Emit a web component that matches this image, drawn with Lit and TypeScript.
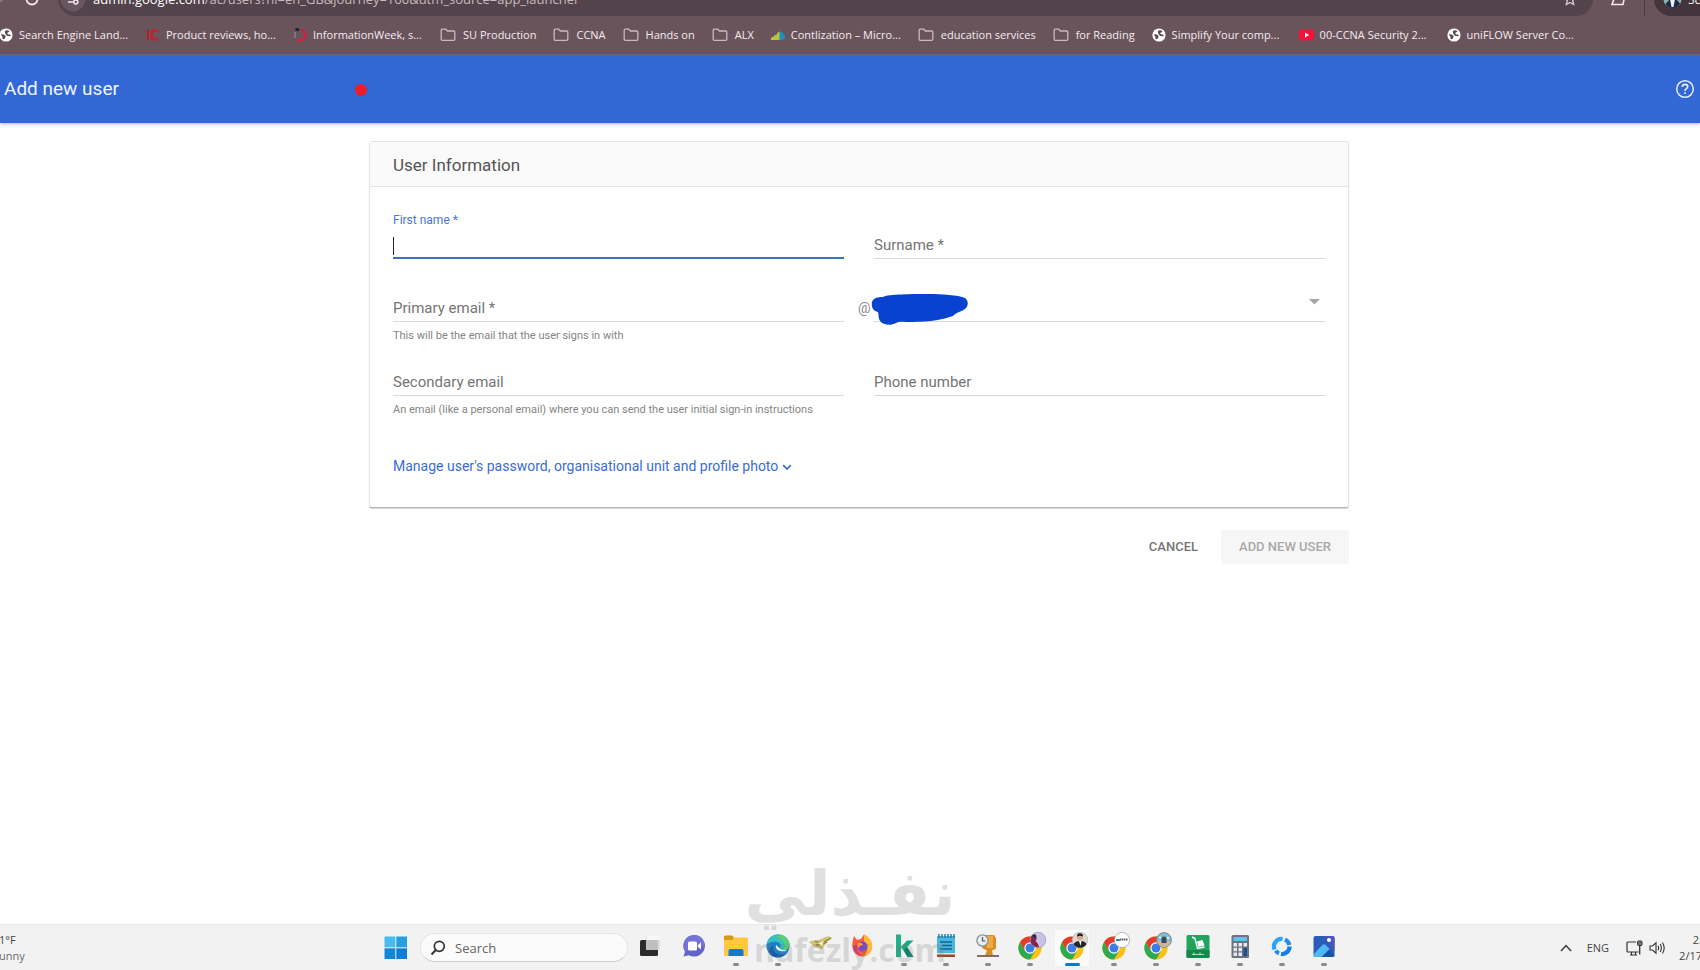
import { LitElement, html, css, svg, nothing } from "lit";
import { customElement } from "lit/decorators.js";

const globe = svg`<svg class="ic" width="14" height="14" viewBox="0 0 14 14"><circle cx="7" cy="7" r="6.6" fill="#fff"/><path d="M2 6.500C3 6 4.500 6 5.500 7 7 7.500 6.500 9 6 10 5.500 11.500 4 11.500 3.200 10.500 4.500 9 2.500 8.500 2 6.500ZM6 3C7 2 9.500 2 10.500 3.200 9.500 4.500 8.500 4.200 8.200 5.500 9 6.800 11 6.200 12 7.500 11.500 8.500 9.500 8.500 8 7.800 6.500 6.800 5.500 4.500 6 3Z" fill="#5b474f"/></svg>`;
const folder = svg`<svg class="ic" width="16" height="14" viewBox="0 0 16 14"><path d="M1.2 2.2Q1.2 1.2 2.2 1.2H5.8L7.4 3H13.8Q14.8 3 14.8 4V11.3Q14.8 12.3 13.8 12.3H2.2Q1.2 12.3 1.2 11.3Z" fill="none" stroke="#c9b9c0" stroke-width="1.3"/></svg>`;
const cnet = svg`<svg class="ic" width="14" height="14" viewBox="0 0 14 14"><path d="M12.500 1.500H8Q4 1.500 4 7T8 12.500H12.500V10.200H8.800Q6.800 10.200 6.800 7T8.800 3.800H12.500Z" fill="#c3202a"/><path d="M2 1.500V12.500" stroke="#a8242d" stroke-width="2"/></svg>`;
const infoweek = svg`<svg class="ic" width="14" height="14" viewBox="0 0 14 14"><path d="M8 1.8A5.3 5.3 0 1 1 4.2 11.6" fill="none" stroke="#d2203f" stroke-width="2.6"/><path d="M2 4V10" stroke="#a58f98" stroke-width="1"/><rect x="2.5" y="0" width="3.6" height="3" fill="#1c2145"/></svg>`;
const chart = svg`<svg class="ic" width="14" height="14" viewBox="0 0 14 14"><path d="M0 12V9.8L3 8.6V7.4L6 6.4V5L9 3.4V12Z" fill="#b9c43c"/><path d="M8.5 3.4 12 4.6 14 8V10.6L11.5 12H8.5Z" fill="#1f8fc0"/></svg>`;
const tube = svg`<svg class="ic" width="15" height="14" viewBox="0 0 15 14"><rect y="1.5" width="15" height="11" rx="2.2" fill="#f6123a"/><path d="M6 4.6 10 7 6 9.4Z" fill="#fff"/></svg>`;

const bookmarks: [unknown, string, boolean][] = [
  [globe, "Search Engine Land...", true],
  [cnet, "Product reviews, ho...", true],
  [infoweek, "InformationWeek, s...", true],
  [folder, "SU Production", false],
  [folder, "CCNA", false],
  [folder, "Hands on", false],
  [folder, "ALX", false],
  [chart, "Contlization – Micro...", true],
  [folder, "education services", false],
  [folder, "for Reading", false],
  [globe, "Simplify Your comp...", true],
  [tube, "00-CCNA Security 2...", true],
  [globe, "uniFLOW Server Co...", true],
];

const chrome = (badge: unknown) => svg`<svg width="34" height="30" viewBox="0 0 34 30">
  <circle cx="17" cy="17" r="11.6" fill="#fbc116"/>
  <path d="M6.95 11.2A11.6 11.6 0 0 1 27.05 11.2L17 11.6 12 19.9Z" fill="#e33b2e"/>
  <path d="M6.95 11.2A11.6 11.6 0 0 0 17 28.6L22 19.9H12Z" fill="#2da94f"/>
  <circle cx="17" cy="17" r="5.7" fill="#fff"/><circle cx="17" cy="17" r="4.5" fill="#3b7de8"/>
  ${badge}</svg>`;

const apps: { name: string; state: "" | "open" | "active"; icon: unknown }[] = [
  { name: "Task view", state: "", icon: svg`<svg width="34" height="30" viewBox="0 0 34 30"><rect x="5" y="9" width="18" height="16" rx="1.5" fill="#2b2b2b"/><path d="M11 5H25V17Q25 19 23 19H11Z" fill="#d9d9d9" opacity=".85"/><path d="M12 5H25V9H12Z" fill="#f7f7f7"/></svg>` },
  { name: "Chat", state: "", icon: svg`<svg width="34" height="30" viewBox="0 0 34 30"><path d="M17 4A10.8 10.8 0 1 1 11.8 24.2L6.6 25.4 8 20.6A10.8 10.8 0 0 1 17 4Z" fill="#6264c7"/><path d="M17 4A10.8 10.8 0 0 1 27.8 15L8 20A10.8 10.8 0 0 1 17 4Z" fill="#7673d6"/><rect x="11" y="10.5" width="9" height="9" rx="1.6" fill="#fff"/><path d="M21 14 24 11.5V18.5L21 16Z" fill="#fff"/></svg>` },
  { name: "File Explorer", state: "open", icon: svg`<svg width="34" height="30" viewBox="0 0 34 30"><path d="M5 6Q5 4.500 6.500 4.500H13L15.500 7.500H5Z" fill="#d6920f"/><rect x="5" y="6.500" width="24" height="18.500" rx="1.600" fill="#ffc83d"/><path d="M5 5.500H13L15 6.500 13 9H5Z" fill="#d99a1c"/><path d="M9.500 25V20Q9.500 18 11.500 18H22.500Q24.500 18 24.500 20V25Z" fill="#1976c8"/></svg>` },
  { name: "Edge", state: "open", icon: svg`<svg width="34" height="30" viewBox="0 0 34 30"><circle cx="17" cy="15" r="11.500" fill="#1b7fcc"/><path d="M5.600 14C6.500 7 11.500 3.500 17 3.500 24 3.500 28.500 8.500 28.500 13.500 28.500 17.500 25.500 19.500 22 19.200 19 19 18.600 17.500 19.400 16 20.600 13.500 18 10.500 14 10.500 10 10.500 7 12 5.600 14Z" fill="#35c1c0"/><path d="M19 4C25 5 28.500 9.500 28.500 13.500 28.500 17.500 25 19.500 22 19.200 26 15 24 8 15 6Z" fill="#5cd071"/><path d="M12 15C11 21 16 25 24 23 20 27 12 28 8.500 22 7 18 9 15.500 12 15Z" fill="#1259a8"/><path d="M15 14C14 18 18 21.500 25 20 26 18.500 20 20 19 17.500Z" fill="#f3f8fb"/></svg>` },
  { name: "Mail client", state: "", icon: svg`<svg width="34" height="30" viewBox="0 0 34 30"><path d="M6 11C12 8 17 10 21 6.500 24 5 27 5 29 7L24 11 19 18.500 11 15.500Z" fill="#cfc27a"/><path d="M12 10C16 13 20 12 28 7M13 14C18 14 21 13 24 11" fill="none" stroke="#8f8334" stroke-width="1.400"/><path d="M15 12 21 10 19 15Z" fill="#f4f0d2"/></svg>` },
  { name: "Firefox", state: "", icon: svg`<svg width="34" height="30" viewBox="0 0 34 30"><path d="M9 5 12 9 16 8 19 3.500C24 6 27 10 27 15.500A9.700 9.700 0 0 1 7.600 16C7 12 8 8 9 5Z" fill="#ff5a3c"/><path d="M19 3.500C24 6 27.300 10 27 16 26.500 21 23 24.500 19 25 24 20 23 14 19 11Z" fill="#ffbd2e"/><path d="M7.600 15C8.500 21 13 25.400 18 25.200 13 24 11 19 12 14Z" fill="#e8276b"/><circle cx="17.500" cy="15.500" r="5" fill="#7a45d6"/><path d="M13 12C16 11 18 12.500 18 14 16 14 14 15.500 13.500 17.500 12.500 15.500 12.300 13.500 13 12Z" fill="#ff9a2e"/></svg>` },
  { name: "Kaspersky", state: "open", icon: svg`<svg width="34" height="30" viewBox="0 0 34 30"><path d="M9 3.500H14V26H9Z" fill="#1fb189"/><path d="M14 16 20 9.500H26.500L20 16 26.500 26H20.500L14 16Z" fill="#1ba884"/><path d="M17 19 20 16 26.500 26H20.500Z" fill="#11806b"/></svg>` },
  { name: "Notepad", state: "open", icon: svg`<svg width="34" height="30" viewBox="0 0 34 30"><rect x="8" y="5" width="18" height="20" rx="1" fill="#48b9dd"/><path d="M8 23H26V26H8Z" fill="#9a4a32"/><path d="M8 22H26V23.500H8Z" fill="#e9e4df"/><path d="M10 3V7M13 3V7M16 3V7M19 3V7M22 3V7M25 3V7" stroke="#176a9c" stroke-width="1.300"/><path d="M11 11H23M13 14.500H23M11 18H23" stroke="#15628f" stroke-width="1.600"/></svg>` },
  { name: "Backup", state: "open", icon: svg`<svg width="34" height="30" viewBox="0 0 34 30"><path d="M12 4H22.500Q24 4 24 6L25 7V17Q25 18.500 23 18.500L21 19.500 22 24.500H14L16 19.500 11 17Z" fill="#d98b25"/><path d="M16 5H22V17H16Z" fill="#efab3e"/><path d="M6 25H28" stroke="#6e6656" stroke-width="1.800"/><circle cx="11.500" cy="9.500" r="5.600" fill="#e9edf0" stroke="#8c949c" stroke-width="1.400"/><path d="M11.500 6V10H14.500" fill="none" stroke="#4b545c" stroke-width="1.200"/></svg>` },
  { name: "Chrome, profile 1", state: "open", icon: chrome(svg`<circle cx="25" cy="9" r="7.800" fill="#c6c3e4" stroke="#8d86ad" stroke-width=".6"/><path d="M18 6Q20 2 23 4 24.500 8 22.500 10 25 12 26 16 20 17 17.500 11Z" fill="#7b2950"/><path d="M19 5Q21 2.500 23 4V7Z" fill="#33203c"/>`) },
  { name: "Chrome, profile 2", state: "active", icon: chrome(svg`<circle cx="25" cy="9" r="7.800" fill="#ddd8d4" stroke="#aaa" stroke-width=".6"/><path d="M18.500 13Q21 9.500 25 10 29.500 9.500 31.500 13 29 17 25 16.800 21 17 18.500 13Z" fill="#20242d"/><circle cx="25" cy="6" r="3" fill="#d6a78b"/><path d="M22 5.500Q22 2.200 25 2.300T28 5.500Q25 4 22 5.500Z" fill="#211c1c"/><path d="M24 10H26.500L25.500 15Z" fill="#fff"/>`) },
  { name: "Chrome, profile 3", state: "open", icon: chrome(svg`<circle cx="25" cy="9" r="7.600" fill="#fff" stroke="#9a9a9a" stroke-width=".7"/><path d="M19 9H23" stroke="#2a8fb0" stroke-width="2"/><path d="M23 8.500H31" stroke="#5b6068" stroke-width="2" stroke-dasharray="1.500 .5"/>`) },
  { name: "Chrome, profile 4", state: "open", icon: chrome(svg`<circle cx="25" cy="9" r="7.400" fill="#7fbdd2" stroke="#8b8580" stroke-width="1"/><path d="M18.500 10H31.500Q30 16 25 16.200 20 16 18.500 10Z" fill="#c9b79a"/><path d="M22.500 12V8.500Q22.500 5.500 25 5.500T27.500 8.500V12Z" fill="#3b4a5b"/><path d="M20 6.500H22M28 7H30" stroke="#fff" stroke-width="1.400"/>`) },
  { name: "Store cart", state: "open", icon: svg`<svg width="34" height="30" viewBox="0 0 34 30"><rect x="5.500" y="4" width="23" height="23" rx="1.500" fill="#22a45d"/><path d="M5.500 19H28.500V25.500Q28.500 27 27 27H7Q5.500 27 5.500 25.500Z" fill="#16894a"/><path d="M11 6 14 7.500 16.500 17.500 23.500 16" fill="none" stroke="#fff" stroke-width="1.400"/><path d="M16 10.500 21.500 9 23.500 14.500 17.500 16Z" fill="#fff"/><path d="M11 23.500H23M13 21.500V23.500M19 21.500V23.500" stroke="#aee0c4" stroke-width="1.100"/></svg>` },
  { name: "Calculator", state: "open", icon: svg`<svg width="34" height="30" viewBox="0 0 34 30"><rect x="8.500" y="4" width="17.500" height="23" rx="1.500" fill="#6d7481"/><rect x="10.500" y="6" width="13.500" height="4" fill="#57c6ee"/><path d="M10.500 12H14V15.500H10.500ZM15.500 12H19V15.500H15.500ZM20.500 12H24V15.500H20.500ZM10.500 16.800H14V20.300H10.500ZM15.500 16.800H19V20.300H15.500ZM10.500 21.600H14V25.100H10.500ZM15.500 21.600H19V25.100H15.500Z" fill="#e6e9ed"/><path d="M20.500 16.800H24V25.100H20.500Z" fill="#1a4f94"/></svg>` },
  { name: "Sync", state: "open", icon: svg`<svg width="34" height="30" viewBox="0 0 34 30"><g fill="none" stroke-width="4.200"><path d="M9.600 18.500A7.500 7.500 0 0 1 17.500 8" stroke="#2aa5f7"/><path d="M20 8.600A7.500 7.500 0 0 1 24.300 14" stroke="#1b8cf2"/><path d="M24.500 15.500A7.500 7.500 0 0 1 16 23" stroke="#147df0"/><path d="M14 22.400A7.500 7.500 0 0 1 10.800 19.700" stroke="#1b8cf2"/></g></svg>` },
  { name: "Photos", state: "open", icon: svg`<svg width="34" height="30" viewBox="0 0 34 30"><rect x="6.500" y="5" width="21" height="21" rx="2" fill="#2a5cb8"/><path d="M17 5H25.500Q27.500 5 27.500 7V20Z" fill="#4a55b8"/><path d="M15 26 20 17.500 27.500 24Q27.500 26 25.500 26Z" fill="#1455ab"/><path d="M6.500 23.500 15.500 13.800Q17 12.800 18.500 13.800L22.500 18 14.500 26H8.500Q6.500 26 6.500 24Z" fill="#4fb8f0"/><circle cx="22" cy="9" r="2" fill="#fff"/></svg>` },
];

@customElement("browser-bar")
class BrowserBar extends LitElement {
  static styles = css`
    :host { display: block; background: #69545c; color: #f3ecef; font-family: "Open Sans", "Noto Sans", sans-serif; }
    .tools { height: 16px; overflow: hidden; display: flex; align-items: flex-end; }
    .tools svg { flex: none; display: block; }
    .reload { width: 58px; height: 34px; background: none; border: 0; padding: 0; }
    .url { flex: 1; height: 34px; border-radius: 0 0 17px 17px; background: #53434a; display: flex; align-items: center; font-size: 13px; color: #c7babf; }
    .site { width: 35px; flex: none; }
    .addr { flex: 1; line-height: 18px; }
    .host { color: #fff; }
    .star { width: 36px; }
    .ext { width: 50px; }
    .profile { width: 46px; height: 34px; background: #43353b; border-radius: 0 0 0 17px; display: flex; align-items: center; gap: 6px; padding-left: 9px; box-sizing: border-box; font-size: 12px; overflow: hidden; flex: none; }
    .rule { width: 1px; height: 24px; align-self: center; background: #4a3b42; margin: 0 9px 0 1px; flex: none; }
    .marks { height: 39px; box-sizing: border-box; display: flex; align-items: center; overflow: hidden; border-bottom: 1px solid #7a6478; }
    .mark { display: flex; align-items: center; gap: 7px; flex: none; margin-right: 17px; color: inherit; text-decoration: none; font-size: 11px; line-height: 16px; }
    .mark.wide { margin-right: 20px; gap: 6px; }
    .wide .txt { width: 107px; white-space: nowrap; }
    .ic { display: block; flex: none; }
    .marks .mark:first-child { margin-left: -1px; }
  `;
  render() {
    return html`
      <div class="tools">
        <button class="reload" aria-label="Reload"><svg width="58" height="34" viewBox="0 0 58 34"><circle cx="32" cy="17" r="5.500" fill="none" stroke="#f0e8eb" stroke-width="1.800"/><circle cx="0" cy="17" r="3" fill="#8f7b83"/></svg></button>
        <div class="url">
          <svg class="site" width="35" height="34" viewBox="0 0 35 34"><circle cx="15" cy="17" r="12.500" fill="#6a565e"/><path d="M10 20H15M15 14H20" stroke="#f0e8eb" stroke-width="1.600"/><circle cx="17.800" cy="20" r="2" fill="none" stroke="#f0e8eb" stroke-width="1.500"/></svg>
          <span class="addr"><span class="host">admin.google.com</span>/ac/users?hl=en_GB&amp;journey=160&amp;utm_source=app_launcher</span>
          <svg class="star" width="36" height="34" viewBox="0 0 36 34"><path d="M13 11.500 14.700 15.500 18.500 16 15.700 18.500 16.700 22.500 13 20.400 9.300 22.500 10.300 18.500 7.500 16 11.300 15.500Z" fill="none" stroke="#d8ccd1" stroke-width="1.300"/></svg>
        </div>
        <svg class="ext" width="50" height="34" viewBox="0 0 50 34"><path d="M19 22.500 21 17V13H29V17L31 17.500 30 22.500Z" fill="none" stroke="#f0e8eb" stroke-width="1.600"/></svg>
        <span class="rule"></span>
        <div class="profile"><svg width="19" height="34" viewBox="0 0 19 34"><circle cx="9.500" cy="17" r="9" fill="#8db8a8"/><path d="M2.500 22 7 17H13L17 21.500A9 9 0 0 1 9.500 26 9 9 0 0 1 2.500 22Z" fill="#1e2a4c"/><path d="M7 17H12L10.500 25H8.500Z" fill="#f2f2f4"/></svg>Sc</div>
      </div>
      <nav class="marks">
        ${bookmarks.map(([icon, text, wide]) => html`<a class="mark ${wide ? "wide" : ""}" href="#">${icon}<span class="txt">${text}</span></a>`)}
      </nav>`;
  }
}

@customElement("user-form")
class UserForm extends LitElement {
  static styles = css`
    :host { display: block; width: 100%; max-width: 980px; font-family: Roboto, sans-serif; }
    .card { border: 1px solid #e4e4e4; border-bottom: 1px solid #b4b4b4; border-radius: 3px; background: #fff; box-shadow: 0 1px 1px rgba(0, 0, 0, .16); overflow: hidden; }
    .title { margin: 0; padding: 3px 23px 0; background: #fafafa; border-bottom: 1px solid #e4e4e4; font-size: 17px; font-weight: 400; line-height: 41px; color: #555; }
    .body { padding: 24px 23px 31px; }
    .grid { display: grid; grid-template-columns: 1fr 1fr; column-gap: 30px; row-gap: 4px; }
    .field { min-height: 59px; display: grid; grid-template-columns: minmax(0, 1fr); grid-template-rows: 19px 29px auto; align-content: start; }
    .field input, .field select { grid-area: 2 / 1; width: 100%; box-sizing: border-box; margin: 0; padding: 0; border: 0; border-bottom: 1px solid #d9d9d9; border-radius: 0; background: transparent; outline: none; appearance: none; font: 15px/28px Roboto, sans-serif; color: #333; }
    .field label { grid-area: 2 / 1; padding-top: 1px; font-size: 15px; line-height: 29px; color: #757575; pointer-events: none; }
    .active input { border-bottom: 2px solid #3b73b9; }
    .active label { grid-area: 1 / 1; font-size: 12px; line-height: 16px; color: #4a74d8; }
    .caret { grid-area: 2 / 1; width: 1px; height: 18px; background: #222; align-self: center; margin-top: 2px; }
    .hint { grid-area: 3 / 1; margin: 6px 0 0; font-size: 11px; line-height: 16px; color: #858585; white-space: nowrap; }
    .domain { grid-template-columns: 16px minmax(0, 1fr); margin-left: -16px; position: relative; }
    .domain label { color: #8a8a8a; font-size: 14px; }
    .domain select { grid-area: 2 / 2; }
    .arrow { grid-area: 2 / 2; justify-self: end; align-self: start; margin: 6px 5px 0 0; pointer-events: none; }
    .mask { position: absolute; left: 12px; top: 19px; }
    .more { margin: 38px 0 0; padding: 0; border: 0; background: none; display: flex; align-items: center; gap: 4px; font: 14px/20px Roboto, sans-serif; color: #3a6cd6; }
    .more svg { margin-top: 3px; }
    .actions { display: flex; justify-content: flex-end; gap: 5px; margin-top: 22px; }
    .btn { height: 34px; padding: 0 18px; border: 0; border-radius: 2px; background: none; font: 500 13px/34px Roboto, sans-serif; color: #757575; text-transform: uppercase; }
    .btn:disabled { background: #f6f6f6; color: #a8a8a8; }
  `;
  field(id: string, label: string, hint = "", active = false) {
    return html`<div class="field ${active ? "active" : ""}">
      <input id=${id} type="text" /><label for=${id}>${label}</label>
      ${active ? html`<span class="caret"></span>` : nothing}
      ${hint ? html`<p class="hint">${hint}</p>` : nothing}
    </div>`;
  }
  render() {
    return html`
      <section class="card">
        <h2 class="title">User Information</h2>
        <div class="body">
          <div class="grid">
            ${this.field("first", "First name *", "", true)}
            ${this.field("surname", "Surname *")}
            ${this.field("primary", "Primary email *", "This will be the email that the user signs in with")}
            <div class="field domain">
              <label for="domain">@</label>
              <select id="domain"><option></option></select>
              <svg class="arrow" width="11" height="6" viewBox="0 0 11 6"><path d="M0 0H11L5.500 5.500Z" fill="#a6a6a6"/></svg>
              <svg class="mask" width="100" height="34" viewBox="0 0 100 34"><path d="M2 9C3 5 8 4 13 4 17 1 45 1 58 1 72 1 88 2 95 5 99 8 98 13 96 15 92 19 86 19 83 23 75 26 60 29 42 29 34 29 29 28 26 30 21 33 14 32 11 29 8 26 9 23 8 19 3 18 1 14 2 9Z" fill="#0743d0"/></svg>
            </div>
            ${this.field("secondary", "Secondary email", "An email (like a personal email) where you can send the user initial sign-in instructions")}
            ${this.field("phone", "Phone number")}
          </div>
          <button class="more">Manage user's password, organisational unit and profile photo<svg width="10" height="7" viewBox="0 0 10 7"><path d="M1.200 1.200 5 5 8.800 1.200" fill="none" stroke="#3a6cd6" stroke-width="1.700"/></svg></button>
        </div>
      </section>
      <div class="actions"><button class="btn">Cancel</button><button class="btn" disabled>Add new user</button></div>`;
  }
}

@customElement("task-bar")
class TaskBar extends LitElement {
  static styles = css`
    :host { display: grid; grid-template-columns: minmax(0, 384px) auto 1fr; align-items: center; height: 46px; box-sizing: border-box; background: #f2f2f2; border-top: 1px solid #e8e8e8; font-family: "Open Sans", "Noto Sans", sans-serif; font-size: 11px; line-height: 16px; color: #454545; overflow: hidden; }
    .weather { display: grid; padding-top: 1px; margin-left: -1px; }
    .cond { color: #6c6c6c; }
    .center { display: flex; align-items: center; }
    .start, .app { border: 0; padding: 0; background: none; flex: none; }
    .start { width: 36px; height: 24px; text-align: left; }
    .start svg, .app svg { display: block; }
    .search { width: 208px; height: 29px; box-sizing: border-box; border: 1px solid #e6e6e6; border-bottom-color: #cfcfcf; border-radius: 15px; background: #fbfbfb; display: flex; align-items: center; gap: 9px; padding-left: 9px; margin-right: 3px; }
    .search input { border: 0; background: none; outline: none; padding: 0; min-width: 0; flex: 1; font: 13px/18px "Open Sans", "Noto Sans", sans-serif; }
    .search input::placeholder { color: #666; opacity: 1; }
    .app { width: 42px; height: 45px; padding-top: 1px; display: grid; grid-template-rows: 30px 3px; justify-items: center; align-content: center; row-gap: 2px; }
    .mark { width: 6px; height: 3px; border-radius: 2px; }
    .open .mark { background: #8a8a8a; }
    .active .mark { width: 15px; background: #0f78c8; }
    .active { background: linear-gradient(#fbfbfb, #fbfbfb) center / 34px 36px no-repeat; }
    .tray { display: flex; align-items: center; justify-content: flex-end; margin-right: -2px; }
    .chev { margin-right: 15px; }
    .net { margin: 0 6px 0 17px; }
    .vol { margin-right: 13px; }
    .clock { display: grid; justify-items: end; white-space: nowrap; }
  `;
  render() {
    return html`
      <div class="weather"><span>1°F</span><span class="cond">unny</span></div>
      <div class="center">
        <button class="start" aria-label="Start"><svg width="24" height="24" viewBox="0 0 24 24"><path d="M.5.500H11.300V11.300H.5Z" fill="#45bdf0"/><path d="M12.300.500H23V11.300H12.300Z" fill="#259fe0"/><path d="M.5 12.300H11.300V23H.5Z" fill="#1486d6"/><path d="M12.300 12.300H23V23H12.300Z" fill="#0f7dd6"/></svg></button>
        <label class="search"><svg width="16" height="16" viewBox="0 0 16 16"><circle cx="9.300" cy="6.300" r="5" fill="none" stroke="#333" stroke-width="1.700"/><path d="M5.800 10 1.500 14.500" stroke="#333" stroke-width="2"/></svg><input type="text" placeholder="Search" aria-label="Search" /></label>
        ${apps.map((a) => html`<button class="app ${a.state}" aria-label=${a.name}>${a.icon}<span class="mark"></span></button>`)}
      </div>
      <div class="tray">
        <svg class="chev" width="12" height="8" viewBox="0 0 12 8"><path d="M1 7 6 1.500 11 7" fill="none" stroke="#3a3a3a" stroke-width="1.500"/></svg>
        <span>ENG</span>
        <svg class="net" width="17" height="16" viewBox="0 0 17 16"><path d="M10 2H2Q1 2 1 3V11Q1 12 2 12H12.500M4 15H11M5.500 12V15M9.500 12V15" fill="none" stroke="#333" stroke-width="1.200"/><rect x="11.500" y="1" width="4.500" height="4.500" rx="1" fill="#777" stroke="#333"/><path d="M13.700 5.500V14.500" stroke="#333" stroke-width="1.300"/></svg>
        <svg class="vol" width="17" height="14" viewBox="0 0 17 14"><path d="M1 5H3.500L7 1.800V12.200L3.500 9H1Z" fill="none" stroke="#333" stroke-width="1.100"/><path d="M9 4.800Q10.300 7 9 9.200M11.200 3Q13.600 7 11.200 11M13.400 1.500Q17 7 13.400 12.500" fill="none" stroke="#333" stroke-width="1.100"/></svg>
        <div class="clock"><span>2:</span><span>2/17</span></div>
      </div>`;
  }
}

@customElement("app-root")
class AppRoot extends LitElement {
  static styles = css`
    :host { display: flex; flex-direction: column; min-height: 100vh; position: relative; overflow: hidden; background: #fff; font-family: Roboto, sans-serif; }
    .head { height: 68px; background: #3367d6; display: flex; align-items: center; justify-content: space-between; padding: 0 5px 0 4px; color: #eef3fd; box-shadow: 0 1px 3px rgba(80, 50, 80, .4); position: relative; }
    .name { margin: 0; font-size: 19px; line-height: 24px; font-weight: 400; }
    .help { border: 0; padding: 0; background: none; height: 20px; }
    .dot { position: absolute; left: 355px; top: 29px; width: 12px; height: 12px; border-radius: 50%; background: #ee1c24; }
    .main { flex: 1; display: flex; justify-content: center; align-items: flex-start; padding: 18px 0 24px 18px; }
    .stamp { position: absolute; left: 0; right: 0; bottom: 0; display: flex; flex-direction: column; align-items: center; color: #787878; opacity: .22; font-family: "DejaVu Sans", sans-serif; font-weight: 700; pointer-events: none; }
    .ar { font-size: 62px; line-height: 72px; }
    .la { font-family: "Open Sans", sans-serif; font-size: 32px; line-height: 40px; }
  `;
  render() {
    return html`
      <browser-bar></browser-bar>
      <header class="head">
        <h1 class="name">Add new user</h1>
        <span class="dot"></span>
        <button class="help" aria-label="Help"><svg width="20" height="20" viewBox="0 0 20 20"><circle cx="10" cy="10" r="8.300" fill="none" stroke="#e6edfb" stroke-width="1.500"/><path d="M7.300 8Q7.300 5.400 10 5.400T12.700 7.800C12.700 9.700 10 9.800 10 12M10 13.300V15" fill="none" stroke="#e6edfb" stroke-width="1.600"/></svg></button>
      </header>
      <main class="main"><user-form></user-form></main>
      <task-bar></task-bar>
      <div class="stamp"><span class="ar" lang="ar" dir="rtl">نفـذلي</span><span class="la">nafezly.com</span></div>`;
  }
}
